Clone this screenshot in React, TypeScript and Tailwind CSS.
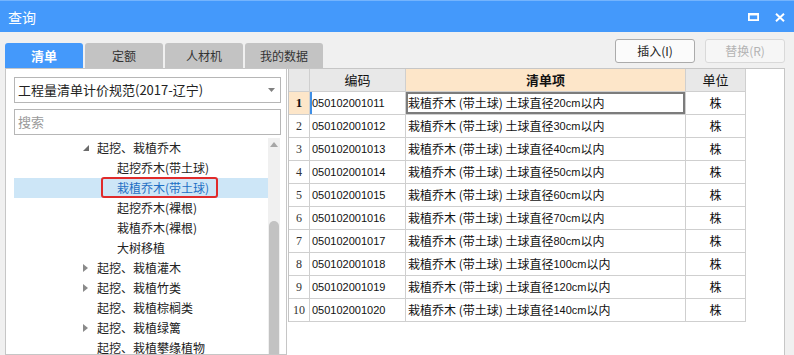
import React from 'react';

const items: [string, string][] = [
  ['050102001011', '20'],
  ['050102001012', '30'],
  ['050102001013', '40'],
  ['050102001014', '50'],
  ['050102001015', '60'],
  ['050102001016', '70'],
  ['050102001017', '80'],
  ['050102001018', '100'],
  ['050102001019', '120'],
  ['050102001020', '140'],
];

type TreeNode = { label: string; level: 1 | 2; arrow?: 'open' | 'closed'; selected?: boolean };

const tree: TreeNode[] = [
  { label: '起挖、栽植乔木', level: 1, arrow: 'open' },
  { label: '起挖乔木(带土球)', level: 2 },
  { label: '栽植乔木(带土球)', level: 2, selected: true },
  { label: '起挖乔木(裸根)', level: 2 },
  { label: '栽植乔木(裸根)', level: 2 },
  { label: '大树移植', level: 2 },
  { label: '起挖、栽植灌木', level: 1, arrow: 'closed' },
  { label: '起挖、栽植竹类', level: 1, arrow: 'closed' },
  { label: '起挖、栽植棕榈类', level: 1 },
  { label: '起挖、栽植绿篱', level: 1, arrow: 'closed' },
  { label: '起挖、栽植攀缘植物', level: 1 },
];

const cjk = { fontFamily: '"Noto Sans CJK SC", "Liberation Sans", sans-serif' };
const tbl = { fontFamily: '"Liberation Sans", "Noto Sans CJK SC", sans-serif' };

function TreeRow({ node }: { node: TreeNode }) {
  return (
    <div
      className={`relative h-[20px] flex items-center text-[12px] ${node.selected ? 'bg-[#cde6f7] text-[#1f6fc4]' : 'text-[#222]'}`}
    >
      {node.level === 1 ? (
        <>
          <span className="w-[69px] shrink-0" />
          <span className="w-[14px] shrink-0 flex items-center">
            {node.arrow === 'open' && (
              <svg width="6" height="6" viewBox="0 0 6 6">
                <path d="M6 0 L6 6 L0 6 Z" fill="#6b6b6b" />
              </svg>
            )}
            {node.arrow === 'closed' && (
              <svg width="5" height="8" viewBox="0 0 5 8">
                <path d="M0 0 L5 4 L0 8 Z" fill="#8a8a8a" />
              </svg>
            )}
          </span>
        </>
      ) : (
        <span className="w-[103px] shrink-0" />
      )}
      <span className="whitespace-nowrap leading-none">{node.label}</span>
      {node.selected && (
        <span className="absolute left-[87px] top-[-1px] w-[117px] h-[21px] border-2 border-[#e02b2b] rounded-[3px]" />
      )}
    </div>
  );
}

export default function App() {
  return (
    <div className="w-[794px] h-[355px] bg-[#f0f0f0] overflow-hidden flex flex-col" style={cjk}>
      {/* title bar */}
      <div className="h-[32px] shrink-0 bg-[#4499fb] border-t border-[#74b4fd] flex items-center justify-between pl-[8px] pr-[9px]">
        <span className="text-white text-[14px] pt-[2px]">查询</span>
        <div className="flex items-center gap-[16px] pt-[1px]">
          <svg width="11" height="8" viewBox="0 0 11 8">
            <rect x="0.9" y="1.2" width="9.2" height="5.9" fill="none" stroke="#fff" strokeWidth="1.8" />
            <rect x="0" y="0" width="11" height="2.4" fill="#fff" />
          </svg>
          <svg width="10" height="9" viewBox="0 0 10 9">
            <path d="M1 0.8 L9 8.2 M9 0.8 L1 8.2" stroke="#fff" strokeWidth="2" />
          </svg>
        </div>
      </div>

      {/* tabs + buttons */}
      <div className="h-[36px] shrink-0 flex justify-between pl-[5px] pr-[9px]">
        <div className="flex items-end gap-[2px]">
          <div className="w-[78px] h-[25px] rounded-t-[3px] bg-[#4499fb] text-white text-[13px] font-bold flex items-center justify-center">
            清单
          </div>
          {['定额', '人材机', '我的数据'].map((t) => (
            <div
              key={t}
              className="w-[78px] h-[25px] rounded-t-[3px] bg-[#c3c3c3] text-[#333] text-[12px] flex items-center justify-center"
            >
              {t}
            </div>
          ))}
        </div>
        <div className="flex gap-[10px] pt-[7px]">
          <div className="w-[80px] h-[24px] border border-[#ababab] rounded-[3px] bg-[#fbfbfb] text-[12px] text-[#222] flex items-center justify-center">
            插入(I)
          </div>
          <div className="w-[80px] h-[24px] border border-[#d9d9d9] rounded-[3px] bg-[#f6f6f6] text-[12px] text-[#b3b3b3] flex items-center justify-center">
            替换(R)
          </div>
        </div>
      </div>

      {/* main */}
      <div className="flex-1 flex pl-[5px] pr-[9px] min-h-0">
        {/* left panel */}
        <div className="w-[282px] shrink-0 bg-white border border-[#c6c6c6] flex flex-col pl-[8px] pt-[8px] overflow-hidden">
          <div className="w-[267px] h-[26px] border border-[#b6b6b6] flex items-center justify-between pl-[3px] pr-[5px] text-[13px] text-[#222]">
            <span>工程量清单计价规范(2017-辽宁)</span>
            <svg width="7" height="4" viewBox="0 0 7 4">
              <path d="M0 0 L7 0 L3.5 4 Z" fill="#808080" />
            </svg>
          </div>
          <div className="w-[267px] h-[26px] mt-[6px] border border-[#b6b6b6] flex items-center pl-[3px] text-[13px] text-[#9a9a9a]">
            搜索
          </div>
          <div className="flex mt-[3px] flex-1 min-h-0">
            <div className="w-[254px] shrink-0">
              {tree.map((n) => (
                <TreeRow key={n.label} node={n} />
              ))}
            </div>
            <div className="w-[12px] shrink-0 bg-[#f0f0f0] flex flex-col items-center">
              <svg width="8" height="5" viewBox="0 0 8 5" className="mt-[4px]">
                <path d="M0 5 L4 0 L8 5 Z" fill="#a6a6a6" />
              </svg>
              <div className="mt-[74px] w-[10px] flex-1 bg-[#c2c2c2] rounded-t-[5px]" />
            </div>
          </div>
        </div>

        {/* right panel */}
        <div className="flex-1 bg-white border-t border-r border-[#c6c6c6] pl-[1px]" style={tbl}>
          <div className="grid grid-cols-[21px_96px_280px_60px] border-l border-[#c4c4c4] w-[457px] text-[12px] text-[#111]">
            <div className="h-[23px] bg-[#e8e8e8] border-r border-b border-[#cfcfcf]" />
            <div className="h-[23px] bg-[#e8e8e8] border-r border-b border-[#cfcfcf] flex items-center justify-center text-[13px]" style={cjk}>
              编码
            </div>
            <div className="h-[23px] bg-[#fde6c9] border-r border-b border-[#cfcfcf] flex items-center justify-center text-[13px] font-bold" style={cjk}>
              清单项
            </div>
            <div className="h-[23px] bg-[#e8e8e8] border-r border-b border-[#cfcfcf] flex items-center justify-center text-[13px]" style={cjk}>
              单位
            </div>
            {items.map(([code, d], i) => (
              <React.Fragment key={code}>
                <div
                  className={`h-[23px] border-r border-b border-[#cfcfcf] flex items-center justify-center ${i === 0 ? 'bg-[#fde6c9] font-bold text-[13px]' : 'bg-white text-[12px] text-[#333]'}`}
                  style={{ fontFamily: '"Liberation Serif", serif' }}
                >
                  {i + 1}
                </div>
                <div
                  className={`h-[23px] border-r border-b border-[#cfcfcf] flex items-center pl-[2px] text-[11px] ${i === 0 ? 'shadow-[inset_2px_0_0_#3f8fe6]' : ''}`}
                >
                  {code}
                </div>
                <div
                  className={`h-[23px] border-r border-b border-[#cfcfcf] flex items-center pl-[2px] text-[12px] whitespace-pre ${i === 0 ? 'shadow-[inset_0_0_0_2px_#7c7c7c]' : ''}`}
                  style={cjk}
                >
                  栽植乔木 (带土球) 土球直径<span className="text-[11px]" style={tbl}>{d}cm</span>以内
                </div>
                <div className="h-[23px] border-r border-b border-[#cfcfcf] flex items-center justify-center text-[12px]" style={cjk}>
                  株
                </div>
              </React.Fragment>
            ))}
          </div>
        </div>
      </div>
    </div>
  );
}
